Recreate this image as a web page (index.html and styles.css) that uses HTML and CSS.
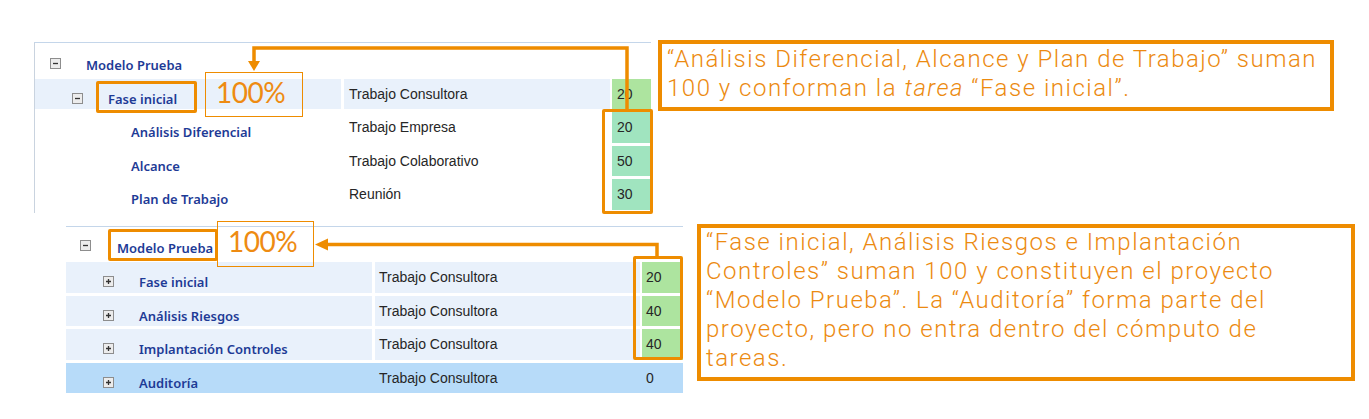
FILE: index.html
```html
<!DOCTYPE html>
<html lang="es">
<head>
<meta charset="utf-8">
<title>Modelo Prueba</title>
<link rel="stylesheet" href="styles.css">
</head>
<body>
<div class="page">
  <section class="block block-top">
    <div class="panel panel-top">
      <div class="row row-head row-head-top">
        <div class="tree lvl0">
          <svg class="tg" viewBox="0 0 11 11" width="11" height="11"><rect x="0.5" y="0.5" width="10" height="10" fill="#ececec" stroke="#8d8d8d"/><path d="M3 5.5h5" stroke="#333" stroke-width="1.3"/></svg>
          <span class="label">Modelo Prueba</span>
        </div>
      </div>
      <div class="row shaded">
        <div class="tree lvl1">
          <svg class="tg" viewBox="0 0 11 11" width="11" height="11"><rect x="0.5" y="0.5" width="10" height="10" fill="#ececec" stroke="#8d8d8d"/><path d="M3 5.5h5" stroke="#333" stroke-width="1.3"/></svg>
          <span class="label">Fase inicial</span>
        </div>
        <div class="mid">Trabajo Consultora</div>
        <div class="num green">20</div>
      </div>
      <div class="row gap">
        <div class="tree lvl2"><span class="label">Análisis Diferencial</span></div>
        <div class="mid">Trabajo Empresa</div>
        <div class="num mint">20</div>
      </div>
      <div class="row gap">
        <div class="tree lvl2"><span class="label">Alcance</span></div>
        <div class="mid">Trabajo Colaborativo</div>
        <div class="num mint">50</div>
      </div>
      <div class="row gap">
        <div class="tree lvl2"><span class="label">Plan de Trabajo</span></div>
        <div class="mid">Reunión</div>
        <div class="num mint">30</div>
      </div>
    </div>
    <div class="callout callout-top">“Análisis Diferencial, Alcance y Plan de Trabajo” suman<br>100 y conforman la <em>tarea</em> “Fase inicial”.</div>

    <div class="hl hl-fase"></div>
    <div class="pct pct-top">100%</div>
    <div class="hl hl-num-top"></div>
    <svg class="arrow arrow-top" width="700" height="180" viewBox="0 0 700 180">
      <path d="M627 70V8H254V22" fill="none" stroke="#ee8c00" stroke-width="3.5"/>
      <path d="M248 21H260L254 31Z" fill="#ee8c00"/>
    </svg>
  </section>

  <section class="block block-bottom">
    <div class="panel panel-bottom">
      <div class="row row-head row-head-bottom">
        <div class="tree lvl0">
          <svg class="tg" viewBox="0 0 11 11" width="11" height="11"><rect x="0.5" y="0.5" width="10" height="10" fill="#ececec" stroke="#8d8d8d"/><path d="M3 5.5h5" stroke="#333" stroke-width="1.3"/></svg>
          <span class="label">Modelo Prueba</span>
        </div>
      </div>
      <div class="row shaded">
        <div class="tree lvl1">
          <svg class="tg" viewBox="0 0 11 11" width="11" height="11"><rect x="0.5" y="0.5" width="10" height="10" fill="#ececec" stroke="#8d8d8d"/><path d="M3 5.5h5M5.5 3v5" stroke="#333" stroke-width="1.3"/></svg>
          <span class="label">Fase inicial</span>
        </div>
        <div class="mid">Trabajo Consultora</div>
        <div class="num green">20</div>
      </div>
      <div class="row shaded gap">
        <div class="tree lvl1">
          <svg class="tg" viewBox="0 0 11 11" width="11" height="11"><rect x="0.5" y="0.5" width="10" height="10" fill="#ececec" stroke="#8d8d8d"/><path d="M3 5.5h5M5.5 3v5" stroke="#333" stroke-width="1.3"/></svg>
          <span class="label">Análisis Riesgos</span>
        </div>
        <div class="mid">Trabajo Consultora</div>
        <div class="num green">40</div>
      </div>
      <div class="row shaded gap">
        <div class="tree lvl1">
          <svg class="tg" viewBox="0 0 11 11" width="11" height="11"><rect x="0.5" y="0.5" width="10" height="10" fill="#ececec" stroke="#8d8d8d"/><path d="M3 5.5h5M5.5 3v5" stroke="#333" stroke-width="1.3"/></svg>
          <span class="label">Implantación Controles</span>
        </div>
        <div class="mid">Trabajo Consultora</div>
        <div class="num green">40</div>
      </div>
      <div class="row selected gap">
        <div class="tree lvl1">
          <svg class="tg" viewBox="0 0 11 11" width="11" height="11"><rect x="0.5" y="0.5" width="10" height="10" fill="#ececec" stroke="#8d8d8d"/><path d="M3 5.5h5M5.5 3v5" stroke="#333" stroke-width="1.3"/></svg>
          <span class="label">Auditoría</span>
        </div>
        <div class="mid">Trabajo Consultora</div>
        <div class="num">0</div>
      </div>
    </div>
    <div class="callout callout-bottom">“Fase inicial, Análisis Riesgos e Implantación<br>Controles” suman 100 y constituyen el proyecto<br>“Modelo Prueba”. La “Auditoría” forma parte del<br>proyecto, pero no entra dentro del cómputo de<br>tareas.</div>

    <div class="hl hl-modelo"></div>
    <div class="pct pct-bottom">100%</div>
    <div class="hl hl-num-bottom"></div>
    <svg class="arrow arrow-bottom" width="700" height="60" viewBox="0 0 700 60">
      <path d="M657 32V20.5H326" fill="none" stroke="#ee8c00" stroke-width="3.5"/>
      <path d="M315 20.5L328 14.5V26.5Z" fill="#ee8c00"/>
    </svg>
  </section>
</div>
</body>
</html>
```
FILE: styles.css
```css
* { box-sizing: border-box; }

body {
  margin: 0;
  background: #ffffff;
}

.page {
  position: relative;
  width: 1369px;
  height: 419px;
  overflow: hidden;
}

.block {
  position: relative;
  display: flex;
  align-items: flex-start;
}

.block-top {
  margin-top: 40px;
  padding-left: 34px;
}

.block-bottom {
  margin-top: 11px;
  padding-left: 66px;
}

/* ---------- grid panels ---------- */
.panel {
  width: 617px;
  margin-top: 2px;
  border-top: 1px solid #c4d6ea;
}

.panel-top {
  border-left: 1px solid #c9d3df;
  padding-bottom: 3.5px;
}

.row {
  display: flex;
  height: 30.5px;
}

.row.gap { margin-top: 3px; }

.row-head-top { height: 35.5px; }
.row-head-bottom { height: 35px; }

.tree {
  width: 306px;
  display: flex;
  align-items: flex-start;
  font-family: "Noto Sans", "DejaVu Sans", sans-serif;
  font-weight: 600;
  font-size: 13px;
  color: #1e3b96;
}

.tree .label {
  line-height: 16px;
  margin-top: 12px;
  white-space: nowrap;
}

.tg {
  flex: none;
  display: block;
  margin-top: 14px;
  margin-right: 25px;
}

.lvl0 { padding-left: 15px; }
.lvl1 { padding-left: 37px; }
.lvl2 { padding-left: 96px; }

.row-head-top .tg { margin-top: 15px; }
.row-head-top .label { margin-top: 14px; }
.row-head-bottom .lvl0 { padding-left: 14px; }
.row-head-bottom .tg { margin-top: 13px; margin-right: 26px; }
.row-head-bottom .label { margin-top: 13px; }

.mid,
.num {
  display: flex;
  align-items: center;
  font-family: "Liberation Sans", Arial, sans-serif;
  font-size: 14px;
  line-height: 16px;
  color: #262626;
  padding-left: 5px;
}

.mid {
  flex: 1;
  margin-left: 3px;
}

.num {
  width: 39px;
  margin-left: 2px;
}

.panel-bottom .num {
  width: 41px;
  padding-left: 4px;
}

.panel-bottom .mid { padding-left: 4px; }

.shaded .tree,
.shaded .mid { background: #e9f1fb; }

.selected { background: #b7dbf9; }

.green { background: #ade49f; }
.mint { background: #a0e4bf; }

/* ---------- callouts ---------- */
.callout {
  border: 4px solid #ee8c00;
  font-family: "Roboto", "Lato", sans-serif;
  font-weight: 300;
  font-size: 24px;
  line-height: 29px;
  letter-spacing: 1.5px;
  color: #ec8a10;
  padding-left: 5px;
  white-space: nowrap;
}

.callout em { font-style: italic; }

.callout-top {
  margin-left: 7px;
  width: 676px;
  height: 71px;
  padding-top: 1px;
}

.callout-bottom {
  margin-left: 14px;
  width: 658px;
  height: 157px;
}

/* ---------- annotation overlays ---------- */
.hl {
  position: absolute;
  border: 3.5px solid #ee8c00;
  border-radius: 2px;
}

.hl-fase { left: 96px; top: 41px; width: 101px; height: 32px; }
.hl-num-top { left: 602px; top: 69px; width: 51px; height: 105px; }
.hl-modelo { left: 108px; top: 5px; width: 110px; height: 32px; }
.hl-num-bottom { left: 633px; top: 32px; width: 50px; height: 104px; }

.pct {
  position: absolute;
  border: 1px solid #ee8c00;
  font-family: "Lato", "Open Sans", sans-serif;
  font-weight: 400;
  font-size: 28px;
  line-height: 39px;
  letter-spacing: -0.5px;
  color: #ee8b12;
  padding-left: 10px;
}

.pct-top { left: 205px; top: 32px; width: 98px; height: 45px; }
.pct-bottom { left: 217px; top: -3px; width: 97px; height: 46px; }

.arrow {
  position: absolute;
  left: 0;
  top: 0;
  overflow: visible;
}
```
